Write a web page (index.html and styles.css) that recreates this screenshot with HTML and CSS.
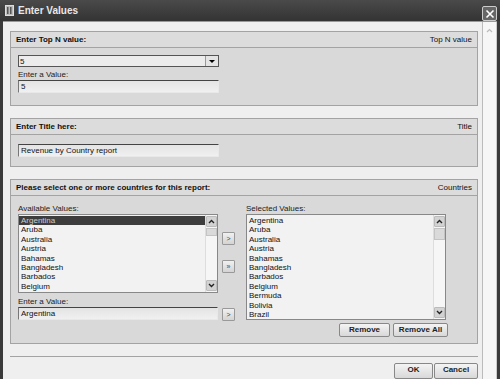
FILE: index.html
```html
<html>
<head>
  <title>Enter Values</title>
  <link rel="stylesheet" href="styles.css">
</head>
<body>
  <div class="window">
    <div class="titlebar">
      <svg class="app-icon" width="9" height="11" viewBox="0 0 9 11">
        <rect x="0.5" y="0.5" width="8" height="10" fill="#bbb" stroke="#ddd"/>
        <rect x="2" y="2" width="1.5" height="7" fill="#555"/>
        <rect x="5" y="2" width="1.5" height="7" fill="#555"/>
      </svg>
      <span class="title">Enter Values</span>
      <div class="close">
        <svg width="10" height="10" viewBox="0 0 10 10">
          <path d="M1.5 1.5 L8.5 8.5 M8.5 1.5 L1.5 8.5" stroke="#fff" stroke-width="1.6"/>
        </svg>
      </div>
    </div>

    <div class="client">
      <div class="content">

        <div class="panel">
          <div class="panel-head">
            <b>Enter Top N value:</b>
            <span>Top N value</span>
          </div>
          <div class="panel-body">
            <div class="select">
              <span>5</span>
              <span class="drop"><i class="tri"></i></span>
            </div>
            <div class="label">Enter a Value:</div>
            <div class="input">5</div>
          </div>
        </div>

        <div class="panel">
          <div class="panel-head">
            <b>Enter Title here:</b>
            <span>Title</span>
          </div>
          <div class="panel-body title-body">
            <div class="input">Revenue by Country report</div>
          </div>
        </div>

        <div class="panel">
          <div class="panel-head">
            <b>Please select one or more countries for this report:</b>
            <span>Countries</span>
          </div>
          <div class="panel-body picker">
            <div class="pick-left">
              <div class="label">Available Values:</div>
              <div class="list-row">
                <div class="listbox short">
                  <ul class="items">
                    <li class="sel">Argentina</li>
                    <li>Aruba</li>
                    <li>Australia</li>
                    <li>Austria</li>
                    <li>Bahamas</li>
                    <li>Bangladesh</li>
                    <li>Barbados</li>
                    <li>Belgium</li>
                  </ul>
                  <div class="sbar">
                    <span class="sbtn"><svg width="7" height="5" viewBox="0 0 7 5"><path d="M1 4 L3.5 1.5 L6 4" fill="none" stroke="#222" stroke-width="1.4"/></svg></span>
                    <span class="thumb"></span>
                    <span class="track"></span>
                    <span class="sbtn"><svg width="7" height="5" viewBox="0 0 7 5"><path d="M1 1 L3.5 3.5 L6 1" fill="none" stroke="#222" stroke-width="1.4"/></svg></span>
                  </div>
                </div>
                <div class="movers">
                  <span class="mbtn">&gt;</span>
                  <span class="mbtn">&raquo;</span>
                </div>
              </div>
              <div class="label gap-label">Enter a Value:</div>
              <div class="value-row">
                <div class="input">Argentina</div>
                <span class="mbtn">&gt;</span>
              </div>
            </div>

            <div class="pick-right">
              <div class="label">Selected Values:</div>
              <div class="listbox tall">
                <ul class="items">
                  <li>Argentina</li>
                  <li>Aruba</li>
                  <li>Australia</li>
                  <li>Austria</li>
                  <li>Bahamas</li>
                  <li>Bangladesh</li>
                  <li>Barbados</li>
                  <li>Belgium</li>
                  <li>Bermuda</li>
                  <li>Bolivia</li>
                  <li>Brazil</li>
                </ul>
                <div class="sbar">
                  <span class="sbtn"><svg width="7" height="5" viewBox="0 0 7 5"><path d="M1 4 L3.5 1.5 L6 4" fill="none" stroke="#222" stroke-width="1.4"/></svg></span>
                  <span class="thumb big"></span>
                  <span class="track"></span>
                  <span class="sbtn"><svg width="7" height="5" viewBox="0 0 7 5"><path d="M1 1 L3.5 3.5 L6 1" fill="none" stroke="#222" stroke-width="1.4"/></svg></span>
                </div>
              </div>
              <div class="btn-row">
                <span class="btn remove">Remove</span>
                <span class="btn remove-all">Remove All</span>
              </div>
            </div>
          </div>
        </div>

        <div class="footer">
          <span class="btn ok">OK</span>
          <span class="btn cancel">Cancel</span>
        </div>
      </div>

      <div class="vscroll">
        <span class="vbtn"><svg width="7" height="5" viewBox="0 0 7 5"><path d="M1 4 L3.5 1.5 L6 4" fill="none" stroke="#bbb" stroke-width="1.2"/></svg></span>
      </div>
    </div>
  </div>
</body>
</html>
```

FILE: styles.css
```css
body {
  margin: 0;
  font-family: "Liberation Sans", Arial, sans-serif;
  font-size: 8px;
  color: #111;
  background: #fff;
}

.window {
  width: 500px;
  height: 379px;
  overflow: hidden;
  background: #3a3a3a;
  display: flex;
  flex-direction: column;
}

.titlebar {
  height: 21px;
  display: flex;
  align-items: center;
  padding: 0 3px 0 5px;
  background: linear-gradient(#4a4a4a, #333);
}

.app-icon {
  margin-right: 4px;
}

.title {
  color: #e8e8e8;
  font-weight: bold;
  font-size: 10px;
  flex: 1;
}

.close {
  width: 13px;
  height: 13px;
  border: 1px solid #ccc;
  border-radius: 2px;
  background: #666;
  display: flex;
  align-items: center;
  justify-content: center;
  margin-top: 6px;
}

.client {
  flex: 1;
  display: flex;
  margin: 0 3px 0 3px;
  background: #efefef;
  border-top: 1px solid #999;
}

.content {
  flex: 1;
  padding: 9px 4px 0 7px;
}

.vscroll {
  width: 13px;
  background: #f6f6f6;
  border-left: 1px solid #bbb;
  border-right: 1px solid #ccc;
}

.vbtn {
  display: flex;
  justify-content: center;
  align-items: center;
  height: 10px;
  margin-top: 3px;
}

/* panels */
.panel {
  background: #d9d9d9;
  border: 1px solid #a3a3a3;
  margin-bottom: 12px;
}

.panel-head {
  height: 15px;
  display: flex;
  justify-content: space-between;
  align-items: center;
  padding: 0 5px;
  border-bottom: 1px solid #a3a3a3;
  background: #dcdcdc;
}

.panel-body {
  padding: 7px 7px 12px 7px;
}

.title-body {
  padding-top: 9px;
  padding-bottom: 9px;
}

.label {
  height: 12px;
  line-height: 13px;
  color: #222;
}

.gap-label {
  height: 14px;
  line-height: 17px;
}

.select {
  width: 198px;
  height: 10px;
  border: 1px solid #555;
  background: #ececec;
  display: flex;
  justify-content: space-between;
  align-items: center;
  padding-left: 1px;
  margin-bottom: 1px;
}

.drop {
  width: 12px;
  height: 10px;
  border-left: 1px solid #999;
  background: #e4e4e4;
  display: flex;
  align-items: center;
  justify-content: center;
}

.tri {
  width: 0;
  height: 0;
  border-left: 3px solid transparent;
  border-right: 3px solid transparent;
  border-top: 3px solid #000;
}

.input {
  width: 197px;
  height: 11px;
  line-height: 11px;
  padding-left: 2px;
  border-top: 1px solid #444;
  border-left: 1px solid #777;
  border-bottom: 1px solid #e8e8e8;
  border-right: 1px solid #e8e8e8;
  background: linear-gradient(#e4e4e4, #f0f0f0);
}

/* country picker */
.picker {
  display: flex;
  padding-top: 6px;
  padding-bottom: 6px;
}

.pick-left {
  width: 217px;
  margin-right: 11px;
}

.pick-right {
  width: 202px;
}

.list-row,
.value-row {
  display: flex;
  gap: 4px;
}

.value-row .mbtn {
  margin-top: 1px;
}

.listbox {
  width: 198px;
  border: 1px solid #888;
  background: #f2f2f2;
  display: flex;
}

.short {
  height: 77px;
}

.tall {
  height: 104px;
}

.items {
  list-style: none;
  margin: 0;
  padding: 1px 0 0 0;
  flex: 1;
  overflow: hidden;
}

.items li {
  height: 9.4px;
  line-height: 9.4px;
  padding-left: 2px;
}

.items li.sel {
  background: #3d3d3d;
  color: #ccc;
}

.sbar {
  width: 11px;
  display: flex;
  flex-direction: column;
  background: #f6f6f6;
  border-left: 1px solid #ddd;
}

.sbtn {
  height: 9px;
  margin: 1px 0;
  background: #d2d2d2;
  border: 1px solid #bbb;
  border-radius: 1px;
  display: flex;
  align-items: center;
  justify-content: center;
}

.thumb {
  height: 6px;
  background: #dadada;
  border: 1px solid #c4c4c4;
}

.thumb.big {
  height: 10px;
}

.track {
  flex: 1;
}

.movers {
  display: flex;
  flex-direction: column;
  padding-top: 18px;
  gap: 15px;
}

.mbtn {
  width: 11px;
  height: 11px;
  border: 1px solid #999;
  background: linear-gradient(#f0f0f0, #d4d4d4);
  border-radius: 1px;
  text-align: center;
  line-height: 11px;
  font-size: 7px;
  color: #444;
}

.btn-row {
  display: flex;
  justify-content: flex-end;
  gap: 3px;
  margin-top: 3px;
}

.btn {
  height: 12px;
  line-height: 12px;
  border: 1px solid #888;
  border-radius: 2px;
  background: linear-gradient(#f4f4f4, #d8d8d8);
  font-weight: bold;
  text-align: center;
  color: #222;
}

.remove {
  width: 49px;
}

.remove-all {
  width: 53px;
}

.footer {
  border-top: 1px solid #a3a3a3;
  margin-top: 5px;
  padding-top: 6px;
  display: flex;
  justify-content: flex-end;
  gap: 1px;
}

.ok {
  width: 37px;
  height: 14px;
}

.cancel {
  width: 42px;
  height: 14px;
}
```
